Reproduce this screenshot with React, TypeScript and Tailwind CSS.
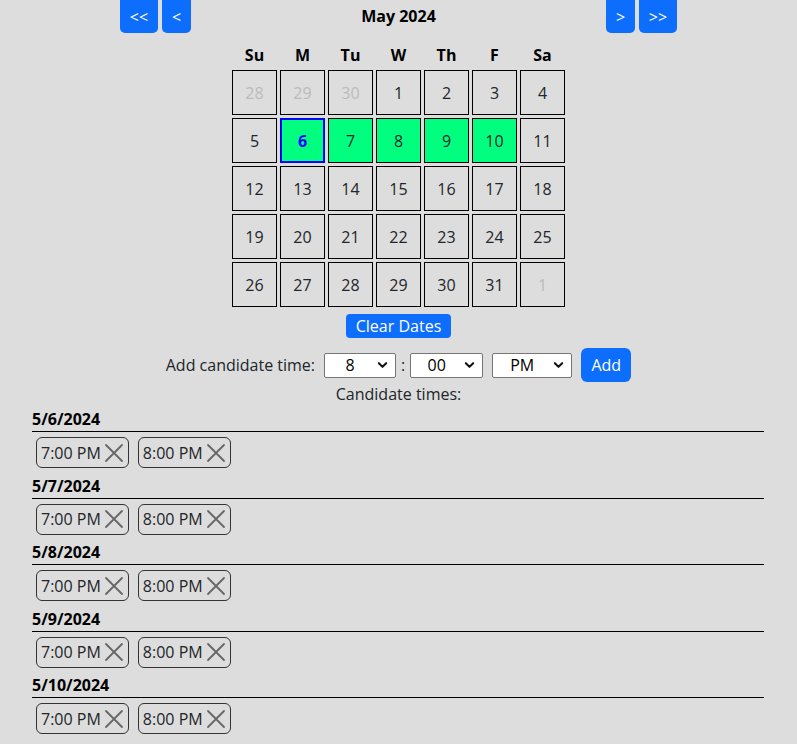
import { useState } from "react";

const weekdays = ["Su", "M", "Tu", "W", "Th", "F", "Sa"];

type Day = { n: number; other?: boolean };

const days: Day[] = [
  { n: 28, other: true },
  { n: 29, other: true },
  { n: 30, other: true },
  ...Array.from({ length: 31 }, (_, i) => ({ n: i + 1 })),
  { n: 1, other: true },
];

const candidateDates = ["5/6/2024", "5/7/2024", "5/8/2024", "5/9/2024", "5/10/2024"];
const times = ["7:00 PM", "8:00 PM"];

function Chevron() {
  return (
    <svg
      className="absolute right-[8px] top-1/2 -translate-y-1/2 w-[11px] h-[11px] pointer-events-none"
      viewBox="0 0 12 12"
      fill="none"
      stroke="#111"
      strokeWidth="2.2"
      strokeLinecap="round"
      strokeLinejoin="round"
    >
      <path d="M2 4l4 4 4-4" />
    </svg>
  );
}

function TimeSelect({ value, width, options }: { value: string; width: string; options: string[] }) {
  return (
    <div className={`relative ${width}`}>
      <select
        defaultValue={value}
        className="w-full h-[25px] appearance-none bg-white border border-[#767676] rounded-[2px] pr-[20px] text-center text-[16px] leading-[23px] text-black"
      >
        {options.map((o) => (
          <option key={o} value={o}>
            {o}
          </option>
        ))}
      </select>
      <Chevron />
    </div>
  );
}

function XIcon() {
  return (
    <svg className="w-[22px] h-[22px] ml-[2px]" viewBox="0 0 22 22" fill="none" stroke="#666" strokeWidth="1.8" strokeLinecap="round">
      <path d="M3 3l16 16M19 3L3 19" />
    </svg>
  );
}

export default function App() {
  const [selected] = useState([6, 7, 8, 9, 10]);

  return (
    <div className="min-h-screen bg-[#dddddd] text-[#212529] font-['Open_Sans',sans-serif] text-[16px]">
      {/* month navigation */}
      <div className="w-[557px] mx-auto flex items-start justify-between">
        <div className="flex gap-[4px]">
          <button className="w-[38px] h-[33px] bg-[#0d6efd] text-white rounded-b-[5px] leading-none">&lt;&lt;</button>
          <button className="w-[29px] h-[33px] bg-[#0d6efd] text-white rounded-b-[5px] leading-none">&lt;</button>
        </div>
        <div className="font-bold leading-[33px] text-black">May 2024</div>
        <div className="flex gap-[4px]">
          <button className="w-[29px] h-[33px] bg-[#0d6efd] text-white rounded-b-[5px] leading-none">&gt;</button>
          <button className="w-[38px] h-[33px] bg-[#0d6efd] text-white rounded-b-[5px] leading-none">&gt;&gt;</button>
        </div>
      </div>

      {/* calendar */}
      <div className="w-[333px] mx-auto mt-[10px]">
        <div className="grid grid-cols-[repeat(7,45px)] gap-x-[3px] mb-[3px]">
          {weekdays.map((w) => (
            <div key={w} className="text-center font-bold leading-6 text-black">
              {w}
            </div>
          ))}
        </div>
        <div className="grid grid-cols-[repeat(7,45px)] auto-rows-[45px] gap-[3px]">
          {days.map((d, i) => {
            const isSel = !d.other && selected.includes(d.n);
            const isFirst = !d.other && d.n === 6;
            return (
              <div
                key={i}
                className={
                  "flex items-center justify-center " +
                  (isFirst
                    ? "border-2 border-[#0000ff] bg-[#00ff7f] text-[#0000ff] font-bold"
                    : isSel
                    ? "border border-black bg-[#00ff7f]"
                    : "border border-black") +
                  (d.other ? " text-[#bbbbbb]" : "")
                }
              >
                {d.n}
              </div>
            );
          })}
        </div>
      </div>

      <div className="flex justify-center mt-[7px]">
        <button className="h-[24px] px-[10px] bg-[#0d6efd] text-white rounded-[4px] leading-[24px]">Clear Dates</button>
      </div>

      {/* add time */}
      <div className="flex justify-center items-center mt-[10px]">
        <span className="mr-[9px]">Add candidate time:</span>
        <TimeSelect value="8" width="w-[72px]" options={["1", "2", "3", "4", "5", "6", "7", "8", "9", "10", "11", "12"]} />
        <span className="mx-[5px]">:</span>
        <TimeSelect value="00" width="w-[73px]" options={["00", "15", "30", "45"]} />
        <div className="w-[9px]" />
        <TimeSelect value="PM" width="w-[80px]" options={["AM", "PM"]} />
        <button className="ml-[9px] h-[34px] w-[50px] bg-[#0d6efd] text-white rounded-[6px]">Add</button>
      </div>
      <div className="text-center leading-6">Candidate times:</div>

      {/* candidate list */}
      <div className="ml-[32px] mr-[33px] pt-[1px] pb-[2px]">
        {candidateDates.map((date) => (
          <section key={date}>
            <h3 className="font-bold leading-6 border-b border-black text-black">{date}</h3>
            <div className="flex gap-[9px] ml-[4px] mt-[5px] mb-[5.5px]">
              {times.map((t) => (
                <div key={t} className="h-[31px] flex items-center pl-[4px] pr-[3px] border border-[#333] rounded-[6px]">
                  <span>{t}</span>
                  <XIcon />
                </div>
              ))}
            </div>
          </section>
        ))}
      </div>
    </div>
  );
}
